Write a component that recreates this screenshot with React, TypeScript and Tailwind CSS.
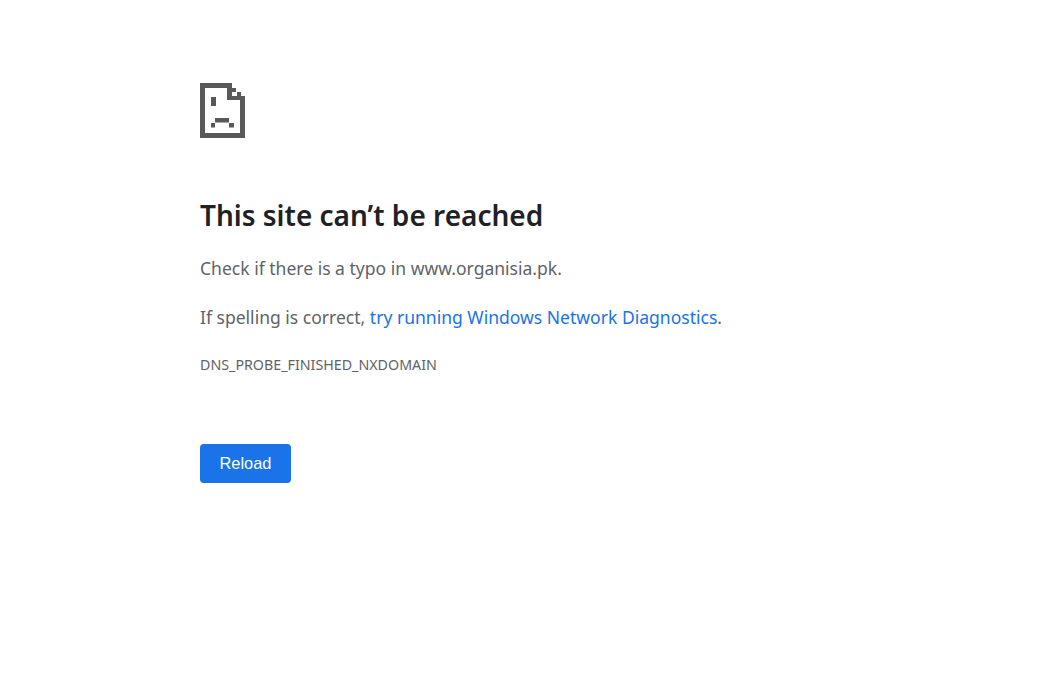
export default function App() {
  return (
    <div className="min-h-[685px] bg-white pl-[200px] pt-[83px] font-['Noto_Sans','Open_Sans',sans-serif]">
      <svg width="45" height="55" viewBox="0 0 45 55" className="block" fill="#595959">
        <path d="M0 0H32V5H5V50H40V17H45V55H0Z" />
        <path d="M27 5H32V13H45V17H27Z" />
        <path d="M32 5H36V9H32ZM37 9H41V14H37Z" />
        <path d="M11 14H16V23H11ZM15 35H29V39.5H15ZM11 40H15V44.5H11ZM29 40H34V44.5H29Z" />
      </svg>
      <h1 className="mt-[59px] text-[28px] leading-[36px] font-semibold text-[#202124]">This site can’t be reached</h1>
      <p className="mt-[23px] text-[17.55px] leading-[24px] text-[#5f6368]">Check if there is a typo in www.organisia.pk.</p>
      <p className="mt-[25px] text-[17.55px] leading-[24px] text-[#5f6368]">
        If spelling is correct, <a className="text-[#1a73e8]">try running Windows Network Diagnostics</a>.
      </p>
      <p className="mt-[26px] text-[14.25px] leading-[20px] text-[#5f6368]">DNS_PROBE_FINISHED_NXDOMAIN</p>
      <button className="mt-[69px] block h-[39px] w-[91px] rounded-[4px] bg-[#1a73e8] font-['Liberation_Sans',sans-serif] text-[16.4px] text-white">Reload</button>
    </div>
  );
}
